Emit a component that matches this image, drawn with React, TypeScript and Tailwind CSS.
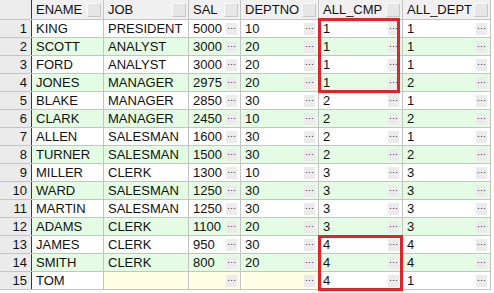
import React from 'react';

type Row = [string, string | null, string | null, string | null, string, string];

const rows: Row[] = [
  ['KING', 'PRESIDENT', '5000', '10', '1', '1'],
  ['SCOTT', 'ANALYST', '3000', '20', '1', '1'],
  ['FORD', 'ANALYST', '3000', '20', '1', '1'],
  ['JONES', 'MANAGER', '2975', '20', '1', '2'],
  ['BLAKE', 'MANAGER', '2850', '30', '2', '1'],
  ['CLARK', 'MANAGER', '2450', '10', '2', '2'],
  ['ALLEN', 'SALESMAN', '1600', '30', '2', '1'],
  ['TURNER', 'SALESMAN', '1500', '30', '2', '2'],
  ['MILLER', 'CLERK', '1300', '10', '3', '3'],
  ['WARD', 'SALESMAN', '1250', '30', '3', '3'],
  ['MARTIN', 'SALESMAN', '1250', '30', '3', '3'],
  ['ADAMS', 'CLERK', '1100', '20', '3', '3'],
  ['JAMES', 'CLERK', '950', '30', '4', '4'],
  ['SMITH', 'CLERK', '800', '20', '4', '4'],
  ['TOM', null, null, null, '4', '1'],
];

const Dots = () => (
  <span className="ml-auto mr-[3px] flex h-[12px] w-[11px] shrink-0 items-center justify-center bg-[#ebebeb] text-[9px] leading-none text-[#222]">
    ···
  </span>
);

const HeadCell = ({ label, w }: { label: string; w: string }) => (
  <div className={`${w} flex h-full items-center border-r border-[#c4c4c4] pl-[4px]`}>
    <span>{label}</span>
    <span className="ml-auto mr-[2px] h-[14px] w-[14px] border border-t-[#fafafa] border-l-[#fafafa] border-r-[#c8c8c8] border-b-[#c8c8c8] bg-[#e6e6e6]" />
  </div>
);

export default function App() {
  return (
    <div className="relative h-[293px] w-[494px] bg-white text-[13px] text-[#111]" style={{ fontFamily: '"Liberation Sans", Arial, sans-serif' }}>
      <div className="w-[491px]">
        {/* header */}
        <div className="flex h-[20px] border-b border-[#c4c4c4] bg-[#f0f0f0]">
          <div className="h-full w-[32px] border-r border-[#3a3a3a] bg-[#ececec]" />
          <HeadCell label="ENAME" w="w-[72px]" />
          <HeadCell label="JOB" w="w-[85px]" />
          <HeadCell label="SAL" w="w-[52px]" />
          <HeadCell label="DEPTNO" w="w-[78px]" />
          <HeadCell label="ALL_CMP" w="w-[84px]" />
          <HeadCell label="ALL_DEPT" w="w-[88px]" />
        </div>
        {rows.map((r, i) => {
          const bg = i % 2 === 1 ? 'bg-[#e3fce3]' : 'bg-white';
          const nul = 'bg-[#fffde3]';
          return (
            <div key={i} className="flex h-[18px] border-b border-[#c4c4c4]">
              <div className="flex h-full w-[32px] items-center justify-end border-r border-[#3a3a3a] bg-[#ebebeb] pr-[4px]">
                {i + 1}
              </div>
              <div className={`flex h-full w-[72px] items-center border-r border-[#c4c4c4] pl-[4px] ${bg}`}>{r[0]}</div>
              <div className={`flex h-full w-[85px] items-center border-r border-[#c4c4c4] pl-[4px] ${r[1] === null ? nul : bg}`}>{r[1]}</div>
              <div className={`flex h-full w-[52px] items-center border-r border-[#c4c4c4] pl-[4px] ${r[2] === null ? nul : bg}`}>
                <span>{r[2]}</span>
                <Dots />
              </div>
              <div className={`flex h-full w-[78px] items-center border-r border-[#c4c4c4] pl-[4px] ${r[3] === null ? nul : bg}`}>
                <span>{r[3]}</span>
                <Dots />
              </div>
              <div className={`flex h-full w-[84px] items-center border-r border-[#c4c4c4] pl-[4px] ${bg}`}>
                <span>{r[4]}</span>
                <Dots />
              </div>
              <div className={`flex h-full w-[88px] items-center border-r border-[#c4c4c4] pl-[4px] ${bg}`}>
                <span>{r[5]}</span>
                <Dots />
              </div>
            </div>
          );
        })}
      </div>
      {/* highlight boxes */}
      <div className="absolute left-[318px] top-[18px] h-[75px] w-[82px] border-[3px] border-[#e3232c]" />
      <div className="absolute left-[318px] top-[235px] h-[56px] w-[85px] border-[3px] border-[#e3232c]" />
    </div>
  );
}
